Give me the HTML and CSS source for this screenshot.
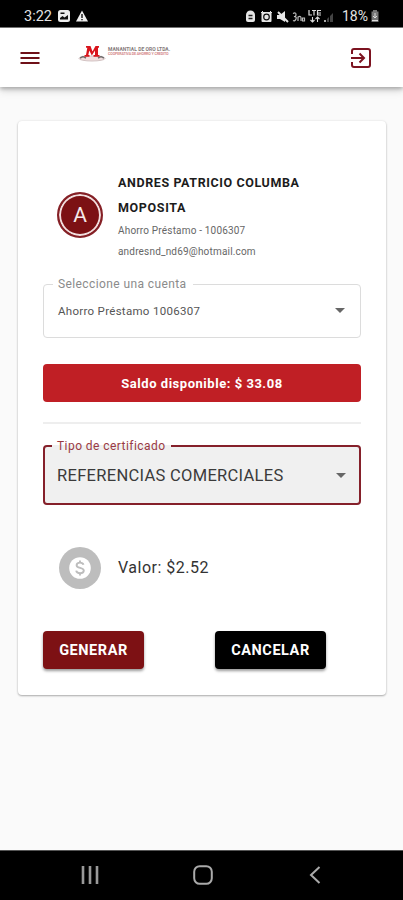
FILE: index.html
```
<!DOCTYPE html>
<html lang="es">
<head>
<meta charset="utf-8">
<title>Certificados</title>
<link rel="stylesheet" href="styles.css">
</head>
<body>
<div class="screen">
  <div class="status">
    <span class="clock">3:22</span>
    <svg class="st-pic" width="12" height="12" viewBox="0 0 12 12"><rect width="12" height="12" rx="2.500" fill="#eee"/><path d="M2 9.500V8l2.500-2 2 1.500L10 5v4.500z" fill="#111"/><rect x="2.500" y="2.500" width="4" height="1.500" fill="#111"/></svg>
    <svg class="st-warn" width="12" height="12" viewBox="0 0 12 12"><path d="M6 .5 12 11.500H0z" fill="#eee"/><path d="M6 4v4M6 9v1.300" stroke="#111" stroke-width="1.400"/></svg>
    <svg class="st-icons" width="88" height="15" viewBox="0 0 88 15">
      <g fill="#e6e6e6">
        <path d="M1 6a4.500 4.500 0 0 1 9 0v5a2 2 0 0 1-2 2H3a2 2 0 0 1-2-2z"/>
        <rect x="16.500" y="3" width="10" height="10" rx="1"/>
        <path d="M32 6h3l5-4v11l-5-3h-3z"/>
      </g>
      <path d="M3.500 6.500h4M3.500 9.500h4" stroke="#222" stroke-width="1.300"/>
      <circle cx="21.500" cy="8" r="2.800" fill="none" stroke="#111" stroke-width="1.200"/>
      <path d="M16 4l2-2M27 4l-2-2" stroke="#e6e6e6"/>
      <path d="M33 3l10 10" stroke="#e6e6e6" stroke-width="2"/>
      <path d="M48 4.500q3-1.500 3 1t-2 2q3 0 2 2.500t-3 1.500M53 12V8q3-1.500 3 1v3M57.500 9h2v3h-2z" fill="none" stroke="#bbb" stroke-width="1.200"/>
      <path d="M64 1v5h3M67 1.500h4M69 1.500v5M76 1.500h-3.500v4.500H76M72.500 4H76" fill="none" stroke="#ddd" stroke-width="1.200"/>
      <path d="M67.500 8v5M65.500 11l2 2 2-2M72.500 13V8M70.500 10l2-2 2 2" fill="none" stroke="#ddd" stroke-width="1.100"/>
      <path d="M79 11h2v2h-2z" fill="#aaa"/><path d="M82 10l2-2v5h-2zM85 7l3-3v9h-3z" fill="#444"/>
    </svg>
    <span class="percent">18%</span>
    <svg class="st-bat" width="8" height="12" viewBox="0 0 8 12"><path d="M2 0h4v1.500h1.500V12h-7V1.500H2z" fill="#777"/><path d="M4 3v4M2 6l2 2 2-2M1 10.500h6" fill="none" stroke="#ddd"/></svg>
  </div>
  <header class="appbar">
    <svg class="menu" width="20" height="14" viewBox="0 0 20 14"><path d="M.500 2h19M.500 7h19M.500 12h19" stroke="#6f1018" stroke-width="2"/></svg>
    <div class="logo">
      <svg width="28" height="18" viewBox="0 0 28 18">
        <ellipse cx="14" cy="13.500" rx="13" ry="2.500" fill="#f1dede" stroke="#d3c4c4" stroke-width="1"/>
        <path d="M2 13l3-1.500 3 1.500M20 13l3-1.500 3 1.500" fill="none" stroke="#757070" stroke-width="1.500"/>
        <path d="M8 1h4.500l2 5.500 3-5.500H21v1.700h-1V10h1.500v1.800h-6V10H17V5.500l-3.200 5-2.500-5L10.300 10h1.200v1.800h-5V10H8l1.300-7.300H8z" fill="#d9141c"/>
      </svg>
      <div class="logo-text"><span class="logo-name">MANANTIAL DE ORO LTDA.</span><span class="logo-sub">COOPERATIVA DE AHORRO Y CREDITO</span></div>
    </div>
    <svg class="exit" width="20" height="20" viewBox="0 0 20 20"><path d="M1 6V3a2 2 0 0 1 2-2h14a2 2 0 0 1 2 2v14a2 2 0 0 1-2 2H3a2 2 0 0 1-2-2v-3M0 10h12.500M8.500 5.500 13 10l-4.500 4.500" fill="none" stroke="#7c1320" stroke-width="2"/></svg>
  </header>
  <main class="content">
    <section class="card">
      <div class="profile">
        <div class="avatar">A</div>
        <div class="who">
          <div class="name"><span class="n1">ANDRES PATRICIO COLUMBA</span><br><span class="n2">MOPOSITA</span></div>
          <div class="detail">Ahorro Préstamo - 1006307</div>
          <div class="detail mail">andresnd_nd69@hotmail.com</div>
        </div>
      </div>
      <fieldset class="field account">
        <legend>Seleccione una cuenta</legend>
        <div class="value"><span>Ahorro Préstamo 1006307</span><i class="caret"></i></div>
      </fieldset>
      <div class="balance"><span>Saldo disponible: $ 33.08</span></div>
      <hr class="rule">
      <fieldset class="field type">
        <legend>Tipo de certificado</legend>
        <div class="value"><span>REFERENCIAS COMERCIALES</span><i class="caret"></i></div>
      </fieldset>
      <div class="cost">
        <svg width="42" height="42" viewBox="0 0 42 42"><circle cx="21" cy="21" r="21" fill="#bdbdbd"/><circle cx="21" cy="21" r="10.800" fill="#fff"/><path d="M24.500 17.800c-.4-1.400-1.600-2.200-3.500-2.200-2 0-3.400 1-3.400 2.600 0 3.600 7.200 1.700 7.200 5.400 0 1.700-1.500 2.700-3.700 2.700-2.100 0-3.600-.9-3.900-2.600M21 13.500v2M21 26.300v2.200" fill="none" stroke="#bdbdbd" stroke-width="1.900"/></svg>
        <span>Valor: $2.52</span>
      </div>
      <div class="actions">
        <button class="btn go"><span>GENERAR</span></button>
        <button class="btn cancel"><span>CANCELAR</span></button>
      </div>
    </section>
  </main>
  <nav class="navbar">
    <svg width="18" height="18" viewBox="0 0 18 18"><path d="M2 0v18M9 0v18M16 0v18" stroke="#999" stroke-width="2.600"/></svg>
    <svg width="20" height="20" viewBox="0 0 20 20"><rect x="1.200" y="1.200" width="17.600" height="17.600" rx="5.500" fill="none" stroke="#aaa" stroke-width="2"/></svg>
    <svg width="12" height="18" viewBox="0 0 12 18"><path d="M10.500 1 2 9l8.500 8" fill="none" stroke="#aaa" stroke-width="2"/></svg>
  </nav>
</div>
</body>
</html>
```
FILE: styles.css
```
* { box-sizing: border-box; }
body { margin: 0; font-family: Roboto, sans-serif; background: #fafafa; }
svg { display: block; flex: none; }
.screen { width: 403px; height: 900px; display: flex; flex-direction: column; overflow: hidden; }
.status { height: 28px; flex: none; background: #000; color: #e4e4e4; display: flex; align-items: center; padding: 5px 0 0 24px; border-bottom: 1px solid #777; }
.clock { font-size: 14.500px; width: 34px; white-space: nowrap; }
.st-warn { margin-left: 6px; }
.st-icons { margin-left: 157px; }
.percent { font-size: 14px; margin-left: 9px; width: 27px; white-space: nowrap; }
.st-bat { margin-left: 2px; }
.appbar { height: 59px; flex: none; background: #fff; display: flex; align-items: center; padding: 0 32px 0 20px; box-shadow: 0 2px 4px rgba(0,0,0,.25), 0 4px 8px rgba(0,0,0,.12); position: relative; }
.logo { display: flex; margin: -8px auto 0 38px; gap: 2px; }
.logo-text { display: flex; flex-direction: column; padding-top: 1px; font-size: 5px; line-height: 6px; white-space: nowrap; font-weight: 700; }
.logo-name { color: #857a7a; letter-spacing: .01px; }
.logo-sub { color: #d58a8a; font-size: 3.700px; line-height: 5px; letter-spacing: -.15px; }
.content { flex: 1; padding: 34px 17px 0 18px; }
.card { height: 574px; background: #fff; border-radius: 4px; padding: 49px 25px 0; box-shadow: 0 1px 2px rgba(0,0,0,.3), 0 0 3px rgba(0,0,0,.07); display: flex; flex-direction: column; }
.profile { display: flex; height: 92px; align-items: center; padding-left: 14px; gap: 15px; }
.avatar { width: 46px; height: 46px; flex: none; border-radius: 50%; border: 2px solid #852026; background: #7c1114; box-shadow: inset 0 0 0 2px #f2dfdf; color: #f5eaea; font-size: 21px; display: flex; align-items: center; justify-content: center; margin-top: -2px; }
.name { font-size: 12.500px; font-weight: 700; line-height: 25px; color: #1c1c1c; white-space: nowrap; }
.n1 { letter-spacing: .6px; }
.n2 { letter-spacing: .65px; }
.detail { font-size: 10px; line-height: 21px; color: #666; letter-spacing: .18px; white-space: nowrap; }
.field { margin: 0; min-width: 0; border-radius: 4px; padding: 0 15px 0 9px; }
.field legend { padding: 0 6px 0 5px; height: 14px; line-height: 14px; white-space: nowrap; }
.value { display: flex; align-items: center; justify-content: space-between; padding-left: 5px; white-space: nowrap; }
.caret { border: 5px solid transparent; border-top-color: #666; border-bottom: 0; }
.account { border: 1px solid #dcdcdc; height: 61px; margin-top: 15px; padding-left: 9px; }
.account legend { font-size: 12px; color: #8b8b8b; letter-spacing: .4px; }
.account .value { height: 39px; font-size: 11.500px; color: #555; letter-spacing: .3px; }
.balance { margin-top: 26px; height: 38px; border-radius: 4px; background: #c01f25; color: #fff; font-size: 13px; font-weight: 700; letter-spacing: .53px; display: flex; align-items: center; justify-content: center; }
.rule { width: 100%; height: 2px; flex: none; margin: 20px 0 0; border: 0; background: #eee; }
.type { border: 2px solid #85202a; height: 66px; margin-top: 15px; background: #f0f0f0; padding-left: 7px; }
.type legend { font-size: 12px; color: #9a3a44; letter-spacing: .44px; }
.type .value { height: 44px; padding-left: 5px; font-size: 16.500px; letter-spacing: .3px; color: #3b3b3b; }
.type .caret { margin-right: -2px; }
.cost { height: 42px; display: flex; align-items: center; padding-left: 16px; gap: 17px; margin-top: 42px; font-size: 16px; letter-spacing: .5px; color: #333; }
.cost span { margin-top: -1px; }
.actions { display: flex; margin-top: 42px; gap: 71px; }
.btn { height: 38px; width: 101px; padding: 0; border: 0; border-radius: 4px; color: #fff; font: 700 14.500px Roboto, sans-serif; letter-spacing: .55px; box-shadow: 0 2px 3px rgba(0,0,0,.4); }
.go { background: #7d1114; }
.cancel { width: 111px; background: #000; }
.navbar { height: 50px; flex: none; background: #000; border-top: 1px solid #555; display: flex; align-items: center; padding: 0 82px 2px 81px; justify-content: space-between; }
.navbar svg:nth-child(2) { margin-right: 2px; }
```
